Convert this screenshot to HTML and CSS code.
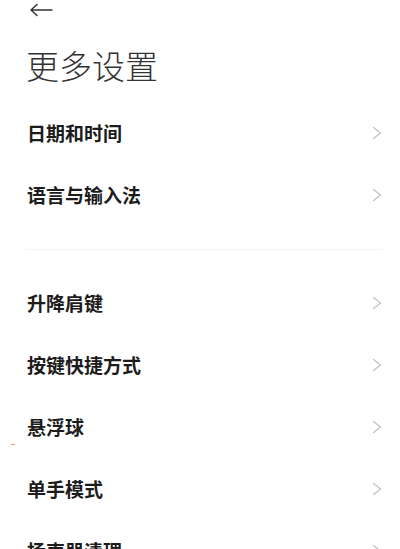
FILE: index.html
```html
<!DOCTYPE html>
<html lang="zh-CN">
<head>
<meta charset="utf-8">
<title>更多设置</title>
<link rel="stylesheet" href="styles.css">
</head>
<body>
<div class="page">
  <div class="topbar">
    <svg class="back" width="24" height="14" viewBox="0 0 24 14">
      <path d="M23 7H2M8 1.5L2 7l6 5.5" fill="none" stroke="#333" stroke-width="1.5" stroke-linecap="round" stroke-linejoin="round"/>
    </svg>
  </div>
  <h1 class="title">更多设置</h1>
  <ul class="list">
    <li class="row"><span class="label">日期和时间</span><svg class="chev" width="10" height="14" viewBox="0 0 10 14"><path d="M1.5 1.5L8.5 7l-7 5.5" fill="none" stroke="#c2c2c2" stroke-width="1.3" stroke-linecap="round" stroke-linejoin="round"/></svg></li>
    <li class="row"><span class="label">语言与输入法</span><svg class="chev" width="10" height="14" viewBox="0 0 10 14"><path d="M1.5 1.5L8.5 7l-7 5.5" fill="none" stroke="#c2c2c2" stroke-width="1.3" stroke-linecap="round" stroke-linejoin="round"/></svg></li>
  </ul>
  <div class="sep"><div class="sep-line"></div></div>
  <ul class="list">
    <li class="row"><span class="label">升降肩键</span><svg class="chev" width="10" height="14" viewBox="0 0 10 14"><path d="M1.5 1.5L8.5 7l-7 5.5" fill="none" stroke="#c2c2c2" stroke-width="1.3" stroke-linecap="round" stroke-linejoin="round"/></svg></li>
    <li class="row"><span class="label">按键快捷方式</span><svg class="chev" width="10" height="14" viewBox="0 0 10 14"><path d="M1.5 1.5L8.5 7l-7 5.5" fill="none" stroke="#c2c2c2" stroke-width="1.3" stroke-linecap="round" stroke-linejoin="round"/></svg></li>
    <li class="row"><span class="label">悬浮球</span><svg class="chev" width="10" height="14" viewBox="0 0 10 14"><path d="M1.5 1.5L8.5 7l-7 5.5" fill="none" stroke="#c2c2c2" stroke-width="1.3" stroke-linecap="round" stroke-linejoin="round"/></svg></li>
    <li class="row"><span class="label">单手模式</span><svg class="chev" width="10" height="14" viewBox="0 0 10 14"><path d="M1.5 1.5L8.5 7l-7 5.5" fill="none" stroke="#c2c2c2" stroke-width="1.3" stroke-linecap="round" stroke-linejoin="round"/></svg></li>
    <li class="row"><span class="label">扬声器清理</span><svg class="chev" width="10" height="14" viewBox="0 0 10 14"><path d="M1.5 1.5L8.5 7l-7 5.5" fill="none" stroke="#c2c2c2" stroke-width="1.3" stroke-linecap="round" stroke-linejoin="round"/></svg></li>
  </ul>
  <span class="mark"></span>
</div>
</body>
</html>
```

FILE: styles.css
```css
html, body {
  margin: 0;
  padding: 0;
  background: #ffffff;
}
body {
  font-family: "Noto Sans CJK SC", "Noto Sans", sans-serif;
  color: #1a1a1a;
  overflow: hidden;
}
.page {
  position: relative;
  width: 400px;
  height: 549px;
  overflow: hidden;
}
.topbar {
  height: 24px;
  display: flex;
  align-items: flex-start;
  padding-left: 29px;
  padding-top: 3px;
  box-sizing: border-box;
}
.back {
  display: block;
}
.title {
  margin: 0;
  height: 78px;
  box-sizing: border-box;
  padding: 19px 0 0 26px;
  font-size: 33px;
  line-height: 44px;
  font-weight: 300;
  color: #333333;
  letter-spacing: 0;
}
.list {
  list-style: none;
  margin: 0;
  padding: 0;
}
.row {
  height: 62px;
  display: flex;
  align-items: center;
  justify-content: space-between;
  padding: 0 18px 0 27px;
}
.label {
  font-size: 19px;
  font-weight: 700;
  color: #1c1c1c;
  line-height: 24px;
}
.chev {
  display: block;
}
.sep {
  height: 46px;
  display: flex;
  align-items: center;
  padding: 0 17px 0 25px;
}
.sep-line {
  flex: 1;
  height: 1px;
  background: #f3f3f3;
}
.mark {
  position: absolute;
  left: 11px;
  top: 444px;
  width: 4px;
  height: 1px;
  background: #e0a080;
}
```
